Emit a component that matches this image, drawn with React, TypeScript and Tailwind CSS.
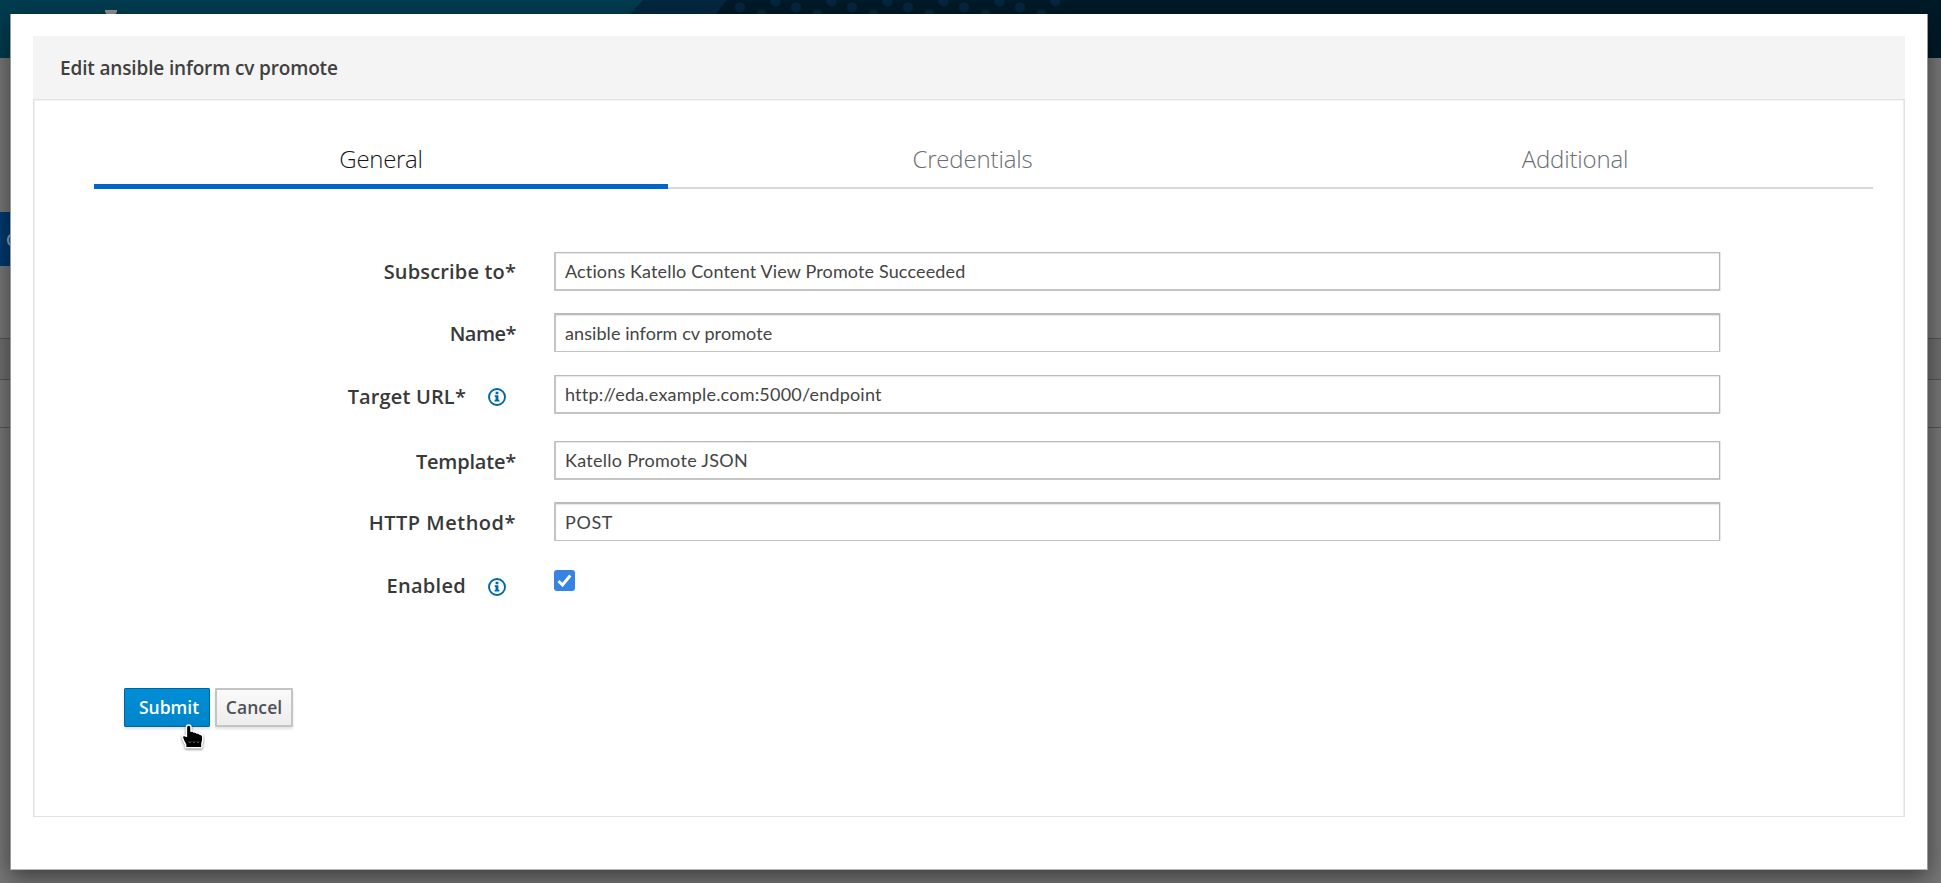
import type { ReactNode } from "react";

const OPEN = "font-['Open_Sans',sans-serif]";
const LATO = "font-['Lato',sans-serif]";

function InfoIcon() {
  return (
    <svg width="18" height="18" viewBox="0 0 18 18" className="mr-[10px] ml-[22px] shrink-0 translate-y-[2px]" fill="none">
      <circle cx="9" cy="9" r="8" stroke="#0068a5" strokeWidth="1.9" />
      <path d="M7.600 3.700h2.800v2.500H7.600zM6.700 7.300h3.700v4.500h1v1.700H6.600v-1.700h1V9h-.9z" fill="#0068a5" />
    </svg>
  );
}

type RowProps = {
  label: string;
  labelClass: string;
  rowClass: string;
  info?: boolean;
  children: ReactNode;
};

function FormRow({ label, labelClass, rowClass, info, children }: RowProps) {
  return (
    <div className={`flex h-[39px] ${rowClass}`}>
      <div className={`flex w-[482px] shrink-0 items-center justify-end text-[20px] leading-[39px] font-semibold whitespace-nowrap text-[#393939] ${OPEN}`}>
        <span className={labelClass}>{label}</span>
        {info && <InfoIcon />}
      </div>
      <div className="ml-[38px] flex w-[1166px]">{children}</div>
    </div>
  );
}

function Field({ value, textClass }: { value: string; textClass: string }) {
  return (
    <div className={`w-full rounded-[1px] border-r border-l-2 border-t-[#bbb] border-r-[#b5b5b5] border-b-[#c4c4c4] border-l-[#c4c4c4] bg-white pl-[9px] text-[18px] whitespace-nowrap text-[#444] shadow-[1px_0_0_#e8e8e8,inset_0_1px_1px_rgba(0,0,0,0.1)] ${LATO} ${textClass}`}>
      {value}
    </div>
  );
}

function Backdrop() {
  return (
    <div className="absolute inset-0 flex flex-col bg-[#777]">
      <svg width="1941" height="58" viewBox="0 0 1941 58" className="shrink-0">
        <defs>
          <pattern id="dots" x="730" y="-11" width="56" height="40" patternUnits="userSpaceOnUse">
            <circle cx="10" cy="18.500" r="5" fill="#04263f" />
            <circle cx="45.500" cy="12.500" r="5" fill="#04263f" />
            <circle cx="31.500" cy="25.500" r="5" fill="#04263f" />
          </pattern>
        </defs>
        <rect width="1941" height="58" fill="#001a28" />
        <path d="M0 0H727L680 58H0z" fill="#042840" />
        <path d="M0 0H643L590 58H0z" fill="#003c50" />
        <rect x="730" width="330" height="20" fill="url(#dots)" />
        <path d="M105 10h12v2l-3 4h-6l-3-4z" fill="#949494" />
      </svg>
      <div className={`mt-[154px] h-[54px] w-12 bg-[#003a70] pl-[6px] text-[20px] leading-[54px] text-[#9aa6b3] ${LATO}`}>C</div>
      <div className="mt-[72px] h-[42px] border-y border-[#555] bg-[#6e6e6e]" />
      <div className="h-[48px] border-b border-[#555]" />
    </div>
  );
}

function Pointer() {
  return (
    <svg width="24" height="27" viewBox="0 0 24 27" className="absolute top-[35px] left-[56px] drop-shadow-[0_1px_1px_rgba(0,0,0,0.5)]">
      <path
        d="M7.600 1c1.700 0 2.400 1 2.400 2.300v3.900c1.100-.4 2.400 0 2.900.9 1.200-.4 2.500 0 3 1 1.300-.2 2.500.3 2.900 1.200 1.700-.1 2.900.8 3 2.500.2 2.400.2 4.700-.9 6.700v4.300H4.600v-3.300C3.200 18.500 2.200 16.200 1.500 14c-.5-1.700.5-3 2.300-2.500l1.600.8V3.300C5.400 2 6 1 7.600 1z"
        fill="#000"
        stroke="#fff"
        strokeWidth="1.500"
        strokeLinejoin="round"
      />
      <path d="M8 17.500l1 1.300 1-1.300M12 17.500l1 1.300 1-1.300M16 17.500l1 1.300 1-1.300" fill="none" stroke="#888" strokeWidth=".8" />
    </svg>
  );
}

export default function App() {
  return (
    <div className="relative h-[883px] w-[1941px] overflow-hidden">
      <Backdrop />
      <div className="absolute inset-0 pt-[14px] pl-[10px]">
        <div className="h-[856px] w-[1918px] border-x border-b border-x-[#999] border-b-[#b5b8b7] bg-white px-[22px] pt-[22px] shadow-[0_7px_22px_rgba(0,0,0,0.5)]">
          <h1 className={`h-[63px] bg-[#f4f4f4] pl-[27px] text-[19px] leading-[64px] font-semibold tracking-[-0.15px] text-[#404040] ${OPEN}`}>
            Edit ansible inform cv promote
          </h1>
          <div className="h-[718px] border border-[#e2e2e2] pt-[35px] pr-[31px] pl-[60px] shadow-[inset_0_1px_1px_rgba(0,0,0,0.05),inset_1px_0_0_#f0f0f0,inset_-1px_0_0_#f0f0f0]">
            <div className={`flex h-[54px] text-center text-[24px] leading-[48px] font-[350] ${OPEN}`}>
              <div className="h-[54px] w-[574px] border-b-[5px] border-[#0066cc] tracking-[-0.3px] text-[#151515]">General</div>
              <div className="h-[54px] w-[609px] border-b-2 border-[#d8d8d8] tracking-[-0.15px] text-[#6a6e73]">Credentials</div>
              <div className="h-[54px] flex-1 border-b-2 border-[#d8d8d8] tracking-[-0.15px] text-[#6a6e73]">Additional</div>
            </div>
            <form className="-ml-[60px] pt-[63px]">
              <FormRow label="Subscribe to*" labelClass="tracking-[0.16px]" rowClass="">
                <Field value="Actions Katello Content View Promote Succeeded" textClass="border-t border-b-2 leading-[37px] tracking-[0.14px]" />
              </FormRow>
              <FormRow label="Name*" labelClass="tracking-[-0.5px] translate-y-px" rowClass="mt-[22px]">
                <Field value="ansible inform cv promote" textClass="border-t-2 border-b leading-[36px] tracking-[0.08px]" />
              </FormRow>
              <FormRow label="Target URL*" labelClass="tracking-[0.15px] translate-y-[2px]" rowClass="mt-[23px]" info>
                <Field value="http://eda.example.com:5000/endpoint" textClass="border-t border-b-2 leading-[37px] tracking-[0.2px]" />
              </FormRow>
              <FormRow label="Template*" labelClass="tracking-[-0.2px] translate-y-px" rowClass="mt-[27px]">
                <Field value="Katello Promote JSON" textClass="border-t border-b-2 leading-[37px] tracking-[0.28px]" />
              </FormRow>
              <FormRow label="HTTP Method*" labelClass="tracking-[0.5px] translate-y-px" rowClass="mt-[22px]">
                <Field value="POST" textClass="border-t-2 border-b leading-[36px] tracking-[0.6px]" />
              </FormRow>
              <FormRow label="Enabled" labelClass="tracking-[0.3px] translate-y-px" rowClass="mt-[24px]" info>
                <span className="mt-[5px] flex h-[21px] w-[21px] items-center justify-center rounded-[3px] bg-[#3584e4]">
                  <svg width="15" height="13" viewBox="0 0 15 13" fill="none">
                    <path d="M1.500 7l4 4L13.300 1.500" stroke="#fff" strokeWidth="2.900" />
                  </svg>
                </span>
              </FormRow>
            </form>
            <div className={`mt-[84px] ml-[30px] flex gap-[5px] text-[17.5px] leading-[37px] font-semibold ${OPEN}`}>
              <button type="button" className="relative h-[39px] w-[86px] rounded-[1px] border border-[#00659c] bg-linear-to-b from-[#008ed6] to-[#0085cb] pl-[4px] text-white shadow-[0_2px_3px_rgba(3,3,3,0.12)]">
                Submit
                <Pointer />
              </button>
              <button type="button" className="h-[39px] w-[78px] rounded-[1px] border-2 border-[#c4c4c4] bg-linear-to-b from-[#fafafa] to-[#ededed] leading-[35px] tracking-[0.1px] text-[#4d5258] shadow-[0_2px_3px_rgba(3,3,3,0.12)]">
                Cancel
              </button>
            </div>
          </div>
        </div>
      </div>
    </div>
  );
}
